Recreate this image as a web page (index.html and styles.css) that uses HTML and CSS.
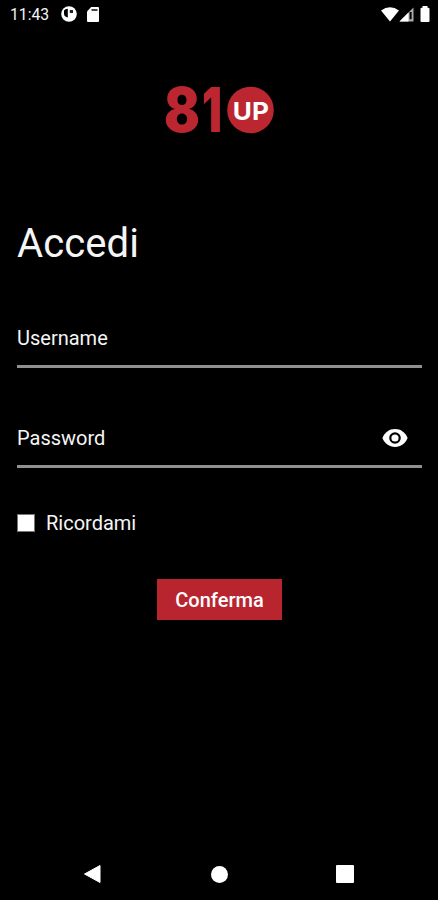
FILE: index.html
```html
<!DOCTYPE html>
<html lang="it">
<head>
<meta charset="utf-8">
<title>Accedi</title>
<link rel="stylesheet" href="styles.css">
</head>
<body>
<div class="screen">
  <header class="status">
    <span class="time">11:43</span>
    <svg class="status-app" width="16" height="16" viewBox="0 0 16 16"><circle cx="8" cy="8" r="7.8" fill="#fff"/><path d="M6.800 2.800V11.500C4.500 11.200 3 10 3 7.500V4.500Q4 2.800 6.800 2.800z" fill="#000"/><path d="M8 4h4v3H8.800V4" fill="#222"/></svg>
    <svg class="status-card" width="12" height="15" viewBox="0 0 12 15"><path d="M4.200 0H11a1 1 0 0 1 1 1v13a1 1 0 0 1-1 1H1a1 1 0 0 1-1-1V4.400z" fill="#fff"/><path d="M4.500 3h6" stroke="#333" stroke-width="1.800"/></svg>
    <span class="spacer"></span>
    <svg width="18" height="15" viewBox="0 0 18 15"><path d="M0 3.500Q9-3.200 18 3.500L9 14.600z" fill="#fff"/></svg>
    <svg width="15" height="15" viewBox="0 0 15 15"><path d="M14.500.5v14H.5z" fill="#aaa"/><path d="M9.500 5.500v9H.5z" fill="#fff"/><path d="M11.600 5v7.200" stroke="#000" stroke-width="2"/></svg>
    <svg class="battery" width="10" height="16" viewBox="0 0 10 16"><path d="M2.500 0h5v1.700h.7q1.300 0 1.300 1.300V15q0 1-1 1H1.500q-1 0-1-1V3q0-1.300 1.300-1.300h.7z" fill="#fff"/></svg>
  </header>
  <svg class="logo" width="110" height="90" viewBox="0 -20 110 90" role="img" aria-label="81UP">
    <text class="digits" x="0" y="46" textLength="36" lengthAdjust="spacingAndGlyphs">8</text>
    <text class="digits" x="38" y="46" textLength="20" lengthAdjust="spacingAndGlyphs">1</text>
    <circle cx="86.500" cy="24" r="23.300" fill="#bb2630"/>
    <text class="up" x="68.800" y="34" textLength="36" lengthAdjust="spacingAndGlyphs">UP</text>
  </svg>
  <main class="form">
    <h1>Accedi</h1>
    <div class="field"><span>Username</span></div>
    <div class="field"><span>Password</span>
      <svg class="eye" width="26" height="20" viewBox="0 0 26 20"><path d="M.4 10C2.600 4.500 7.300 1.100 13 1.100S23.400 4.500 25.600 10C23.400 15.500 18.700 18.900 13 18.900S2.600 15.500.4 10z" fill="#fff"/><circle cx="13" cy="10" r="4.700" fill="#fff" stroke="#000" stroke-width="2.200"/></svg>
    </div>
    <label class="remember"><span class="box"></span><span>Ricordami</span></label>
    <button class="confirm">Conferma</button>
  </main>
  <nav class="nav">
    <svg width="18" height="20" viewBox="0 0 18 20"><path d="M1.500 10L17 1.500v17z" fill="#fff" stroke="#fff" stroke-linejoin="round"/></svg>
    <span class="home"></span>
    <span class="recent"></span>
  </nav>
</div>
</body>
</html>
```
FILE: styles.css
```css
* { box-sizing: border-box; }
body { margin: 0; background: #000; color: #f5f5f5; font-family: Roboto, "Liberation Sans", sans-serif; }
svg { display: block; flex: none; }
.screen { width: 438px; height: 900px; display: flex; flex-direction: column; overflow: hidden; background: #000; }
.status { height: 28px; display: flex; align-items: center; padding: 0 8px 0 10px; flex: none; }
.time { font-size: 15.7px; width: 51px; line-height: 28px; padding-top: 1px; }
.status-card { margin-left: 10px; }
.spacer { flex: 1; }
.battery { margin-left: 6px; }
.logo { margin: 38px 0 0 164px; }
.digits { font: 900 62px Inter, sans-serif; fill: #bb2630; }
.up { font: 700 24.5px Inter, sans-serif; fill: #fff; }
.form { display: flex; flex-direction: column; padding: 0 16px 0 17px; flex: 1; }
h1 { margin: 63px 0 0; font-size: 40px; font-weight: 400; line-height: 50px; letter-spacing: 0.1px; }
.field { height: 46px; margin-top: 53px; border-bottom: 3px solid #909090; display: flex; justify-content: space-between; align-items: flex-start; font-size: 20px; line-height: 32px; }
.field + .field { margin-top: 54px; }
.eye { margin: 6px 14px 0 0; }
.remember { display: flex; align-items: center; gap: 11px; height: 28px; margin-top: 41px; font-size: 20px; }
.box { width: 18px; height: 18px; background: #fff; border: 1px solid #777; }
.confirm { align-self: center; width: 125px; height: 41px; margin-top: 42px; padding: 0; border: 0; background: #b9252e; color: #fff; font: 500 20px Roboto, sans-serif; }
.nav { height: 52px; display: flex; justify-content: space-between; align-items: center; padding: 0 84px 0 83px; flex: none; }
.home { width: 17px; height: 17px; margin-left: 1px; border-radius: 50%; background: #fff; }
.recent { width: 18px; height: 18px; border-radius: 1px; background: #fff; }
```
